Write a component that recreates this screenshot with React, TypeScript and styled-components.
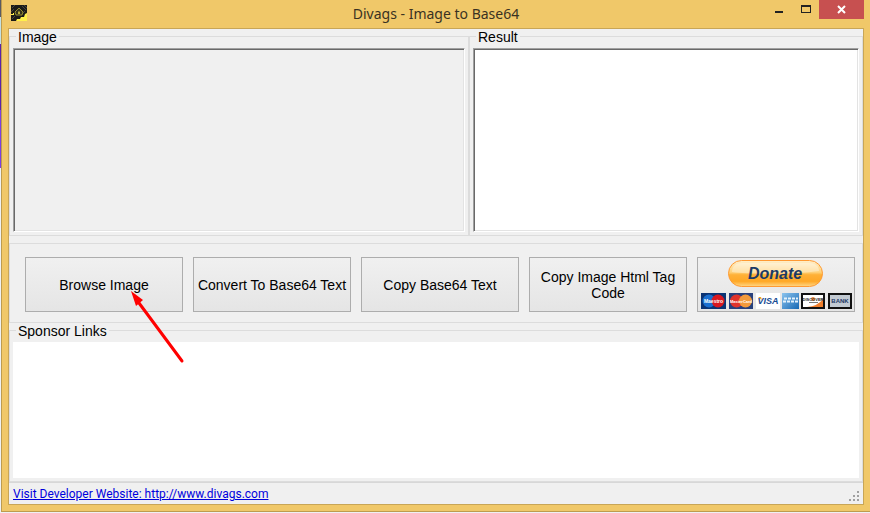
import React from "react";
import styled, { createGlobalStyle } from "styled-components";

const GlobalStyle = createGlobalStyle`
  *, *::before, *::after { box-sizing: border-box; }
  body {
    margin: 0;
    background: #e9eef2;
    font-family: "Liberation Sans", Arial, sans-serif;
    font-size: 14px;
    line-height: 16px;
    color: #000;
  }
`;

const Desktop = styled.div`
  display: flex;
  min-height: 100vh;
  padding: 0 0 1px 1px;
  background: linear-gradient(#5a5a62 0 17px, #c3e0e4 17px 44px, #5a22a8 44px 110px, #7d3fe0 110px 168px, #eef1f4 168px);
`;

const Window = styled.main`
  flex: 1;
  display: flex;
  flex-direction: column;
  min-width: 0;
  padding: 0 6px 6px;
  background: #f0c869;
  border: solid #bd9c50;
  border-width: 0 0 1px 1px;
`;

const TitleBar = styled.header`
  display: grid;
  grid-template-columns: 1fr auto 1fr;
  height: 28px;
`;

const AppIcon = styled.svg`
  width: 16px;
  height: 16px;
  margin: 5px 0 0 3px;
`;

const Title = styled.h1`
  margin: 0;
  font: 400 14px/28px "Noto Sans", "Segoe UI", sans-serif;
  color: #3a3222;
`;

const WindowControls = styled.div`
  display: flex;
  justify-content: flex-end;
  height: 19px;
`;

const ControlButton = styled.button<{ $close?: boolean }>`
  width: ${(p) => (p.$close ? 45 : 27)}px;
  padding: 0;
  border: 0;
  background: ${(p) => (p.$close ? "#c75050" : "transparent")};
  svg { display: block; margin: 0 auto; }
`;

const Client = styled.div`
  flex: 1;
  display: flex;
  flex-direction: column;
  background: #f0f0f0;
  border: 1px solid #c8a657;
`;

const TopPanels = styled.div`
  display: grid;
  grid-template-columns: 460fr 394fr;
  height: 207px;
`;

const Group = styled.fieldset<{ $grow?: boolean }>`
  display: flex;
  flex-direction: column;
  flex: ${(p) => (p.$grow ? "1" : "none")};
  min-width: 0;
  margin: 0;
  padding: 4px 3px 3px;
  border: 1px solid #dcdcdc;
`;

const Legend = styled.legend`
  height: 15px;
  margin-left: 3px;
  padding: 0 2px;
  line-height: 17px;
`;

const sunken = `
  border: 1px solid;
  border-color: #a0a0a0 #fff #fff #a0a0a0;
  box-shadow: inset 1px 1px #696969, inset -1px -1px #e3e3e3;
`;

const Preview = styled.div`
  flex: 1;
  ${sunken}
`;

const ResultText = styled.textarea`
  flex: 1;
  width: 100%;
  padding: 3px;
  resize: none;
  outline: none;
  background: #fff;
  font: inherit;
  ${sunken}
`;

const Actions = styled.div`
  display: grid;
  grid-template-columns: repeat(5, 1fr);
  gap: 10px;
  height: 80px;
  margin-top: 7px;
  padding: 13px 7px 10px 15px;
  border: 1px solid #dcdcdc;
`;

const ActionButton = styled.button`
  position: relative;
  display: flex;
  align-items: center;
  justify-content: center;
  min-width: 0;
  padding: 0 2px;
  border: 1px solid #adadad;
  background: linear-gradient(#f0f0f0, #e5e5e5);
  color: #000;
  font: inherit;
  text-align: center;
`;

const Pointer = styled.svg`
  position: absolute;
  left: 104px;
  top: 32px;
  width: 56px;
  height: 76px;
  z-index: 1;
  pointer-events: none;
`;

const DonateArt = styled.svg`
  width: 152px;
  height: 53px;
  flex: none;
  font-family: "Liberation Sans", Arial, sans-serif;
  font-weight: 700;
`;

const Sponsors = styled.div`
  flex: 1;
  background: #fff;
`;

const StatusBar = styled.footer`
  display: flex;
  align-items: flex-start;
  justify-content: space-between;
  height: 22px;
  padding: 2px 3px 0 4px;
  border-top: 1px solid #d7d7d7;
`;

const SiteLink = styled.a`
  font: 12px/18px Roboto, "Segoe UI", sans-serif;
  color: #0000dd;
  text-decoration: underline;
`;

const Grip = styled.svg`
  width: 11px;
  height: 11px;
  margin-top: 6px;
`;

const gripDots = [[8, 0], [4, 4], [8, 4], [0, 8], [4, 8], [8, 8]];

function DonateBadge() {
  return (
    <DonateArt viewBox="0 0 152 53" aria-hidden="true">
      <defs>
        <linearGradient id="pill" x2="0" y2="1">
          <stop offset="0" stopColor="#fff0cc" />
          <stop offset=".45" stopColor="#ffd27a" />
          <stop offset=".55" stopColor="#ffb137" />
          <stop offset=".8" stopColor="#ffa826" />
          <stop offset="1" stopColor="#ffd888" />
        </linearGradient>
        <linearGradient id="amex" x2="1" y2="1">
          <stop offset="0" stopColor="#8cc4ee" />
          <stop offset="1" stopColor="#1668b4" />
        </linearGradient>
      </defs>
      <rect x="28.500" y="2.500" width="94" height="26" rx="13" fill="url(#pill)" stroke="#ff9a33" />
      <path d="M32 14C32 8 36 5 42 5H109C115 5 119 8 119 13C100 16 55 17 32 14Z" fill="#fff" opacity=".35" />
      <text x="75" y="21" textAnchor="middle" fontSize="16" fontStyle="italic" fill="#1b3a66">Donate</text>

      <rect x="1" y="35" width="25" height="16" fill="#0b3474" />
      <circle cx="9" cy="43" r="6.500" fill="#1a6fd0" />
      <circle cx="18" cy="43" r="6.500" fill="#d81820" />
      <text x="13.500" y="45" textAnchor="middle" fontSize="5" fill="#fff">Maestro</text>

      <rect x="29" y="35" width="24" height="16" fill="#28407c" />
      <circle cx="36.500" cy="43" r="6.500" fill="#e0332c" />
      <circle cx="45.500" cy="43" r="6.500" fill="#f29a3c" />
      <text x="41" y="45" textAnchor="middle" fontSize="4" fill="#fff">MasterCard</text>

      <rect x="56" y="35" width="24" height="16" fill="#fff" />
      <path d="M58 39h3l1 3z" fill="#f0a020" />
      <text x="68" y="46" textAnchor="middle" fontSize="9" fontStyle="italic" fill="#184c94">VISA</text>

      <rect x="82" y="35" width="17" height="16" fill="url(#amex)" />
      <path d="M84 40.500h14M83 43.500h15" stroke="#e4f2fc" strokeWidth="2" strokeDasharray="3 1" />

      <rect x="102" y="36" width="22" height="14" fill="#fff" stroke="#111" strokeWidth="2" />
      <path d="M107 49Q118 48 123 41V49Z" fill="#ef7e2c" />
      <circle cx="113" cy="41" r="2" fill="#ef8a3c" />
      <text x="113" y="43" textAnchor="middle" fontSize="4" fill="#222">DISCOVER</text>
      <path d="M109 44.500h9" stroke="#777" />

      <rect x="129" y="36" width="22" height="14" fill="#c2cad2" stroke="#111" strokeWidth="2" />
      <text x="140" y="45" textAnchor="middle" fontSize="6" fill="#1d3766">BANK</text>
    </DonateArt>
  );
}

export default function App() {
  return (
    <Desktop>
      <GlobalStyle />
      <Window>
        <TitleBar>
          <AppIcon viewBox="0 0 16 16" aria-hidden="true">
            <rect width="16" height="16" fill="#1c1b18" />
            <path d="M1 3 4 0M0 7 3 4M11 1 15 5M13 0 16 3M1 14 4 11M12 8 14 6" stroke="#484640" />
            <path d="M8 3 12 7 11 10H5L4 7Z" fill="#34321c" stroke="#958c32" />
            <path d="M7 7 8 6 9 7V9H7Z" fill="#b5aa3c" />
            <path d="M5 16 6 14 9 14 10 12 13 12 14 9 16 8V16ZM0 9H2V8H3V10H0Z" fill="#fff04a" />
          </AppIcon>
          <Title>Divags - Image to Base64</Title>
          <WindowControls>
            <ControlButton aria-label="Minimize">
              <svg width="27" height="19"><path d="M10 11h8v2h-8z" fill="#222" /></svg>
            </ControlButton>
            <ControlButton aria-label="Maximize">
              <svg width="27" height="19"><path d="M9 5h10v8H9zM10 7v5h8V7z" fillRule="evenodd" fill="#222" /></svg>
            </ControlButton>
            <ControlButton $close aria-label="Close">
              <svg width="45" height="19"><path d="m19 6 7 7m0-7-7 7" stroke="#fff" strokeWidth="2" /></svg>
            </ControlButton>
          </WindowControls>
        </TitleBar>
        <Client>
          <TopPanels>
            <Group>
              <Legend>Image</Legend>
              <Preview />
            </Group>
            <Group>
              <Legend>Result</Legend>
              <ResultText aria-label="Result" />
            </Group>
          </TopPanels>
          <Actions>
            <ActionButton>
              Browse Image
              <Pointer viewBox="0 0 56 76" aria-hidden="true">
                <path d="M52 71 9 13" stroke="#f00" strokeWidth="3" strokeLinecap="round" />
                <path d="M1 1 13 10 6 16Z" fill="#f00" />
              </Pointer>
            </ActionButton>
            <ActionButton>Convert To Base64 Text</ActionButton>
            <ActionButton>Copy Base64 Text</ActionButton>
            <ActionButton>Copy Image Html Tag Code</ActionButton>
            <ActionButton aria-label="Donate">
              <DonateBadge />
            </ActionButton>
          </Actions>
          <Group $grow>
            <Legend>Sponsor Links</Legend>
            <Sponsors />
          </Group>
          <StatusBar>
            <SiteLink href="http://www.divags.com">Visit Developer Website: http://www.divags.com</SiteLink>
            <Grip viewBox="0 0 11 11" aria-hidden="true">
              {gripDots.map(([x, y]) => <rect key={`${x}-${y}`} x={x} y={y} width="2" height="2" fill="#a0a0a0" />)}
            </Grip>
          </StatusBar>
        </Client>
      </Window>
    </Desktop>
  );
}
